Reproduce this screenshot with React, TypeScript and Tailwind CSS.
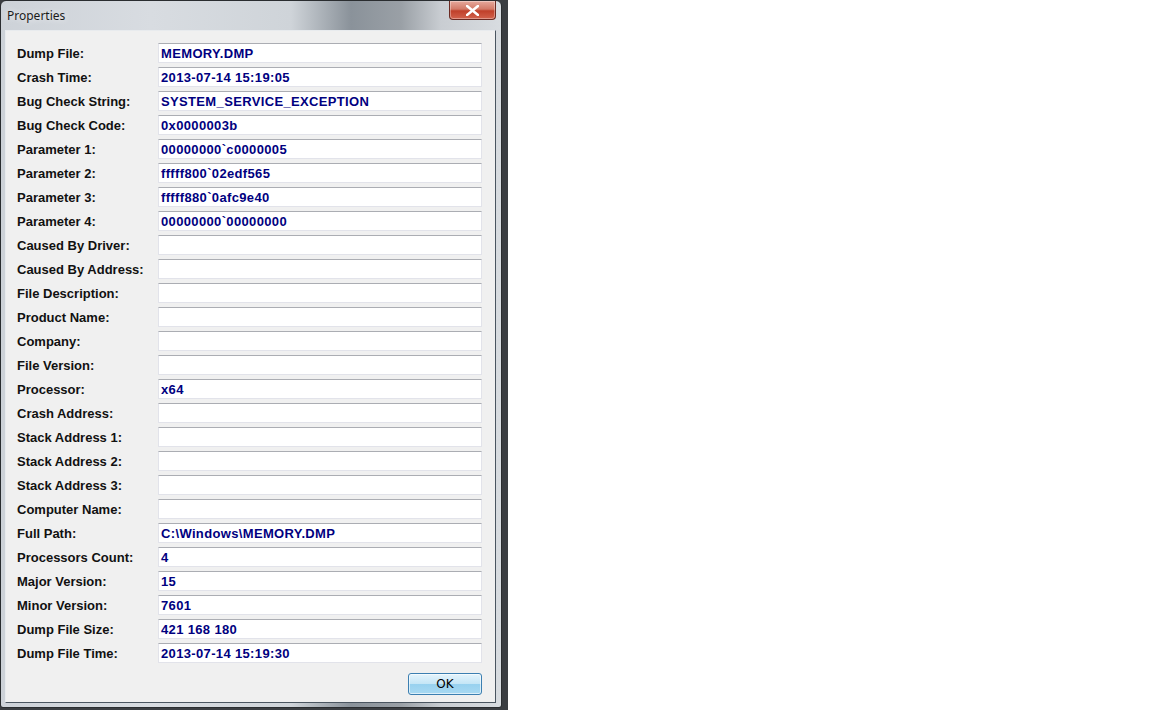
import React from "react";

const rows: [string, string][] = [
  ["Dump File:", "MEMORY.DMP"],
  ["Crash Time:", "2013-07-14 15:19:05"],
  ["Bug Check String:", "SYSTEM_SERVICE_EXCEPTION"],
  ["Bug Check Code:", "0x0000003b"],
  ["Parameter 1:", "00000000`c0000005"],
  ["Parameter 2:", "fffff800`02edf565"],
  ["Parameter 3:", "fffff880`0afc9e40"],
  ["Parameter 4:", "00000000`00000000"],
  ["Caused By Driver:", ""],
  ["Caused By Address:", ""],
  ["File Description:", ""],
  ["Product Name:", ""],
  ["Company:", ""],
  ["File Version:", ""],
  ["Processor:", "x64"],
  ["Crash Address:", ""],
  ["Stack Address 1:", ""],
  ["Stack Address 2:", ""],
  ["Stack Address 3:", ""],
  ["Computer Name:", ""],
  ["Full Path:", "C:\\Windows\\MEMORY.DMP"],
  ["Processors Count:", "4"],
  ["Major Version:", "15"],
  ["Minor Version:", "7601"],
  ["Dump File Size:", "421 168 180"],
  ["Dump File Time:", "2013-07-14 15:19:30"],
];

export default function App() {
  return (
    <div className="w-[1152px] h-[710px] bg-white flex">
      <div className="w-[508px] h-[710px] bg-[#3b3e42] flex flex-col">
        <div className="w-[502px] h-[708px] rounded-t-[6px] rounded-b-[3px] border border-[#2a2d30] bg-[linear-gradient(90deg,#cdd2d8_0%,#d8dce1_30%,#cfd4d9_58%,#8a929a_70%,#9aa0a6_80%,#c9cdd2_88%,#d8dce0_100%)] flex flex-col">
          <div className="h-[29px] flex items-start justify-between pl-[6px] pr-[5px]">
            <span
              className="mt-[8px] text-[12px] leading-[14px] text-[#1b1b1b]"
              style={{ fontFamily: '"Noto Sans", "Open Sans", sans-serif', textShadow: "0 0 6px rgba(255,255,255,0.9)" }}
            >
              Properties
            </span>
            <div className="w-[47px] h-[19px] rounded-b-[4px] border border-[#6b2a22] border-t-0 bg-[linear-gradient(180deg,#e6a99c_0%,#d27a68_45%,#c0402a_55%,#d2624c_100%)] flex items-center justify-center shadow-[inset_0_0_0_1px_rgba(255,255,255,0.35)]">
              <svg width="13" height="11" viewBox="0 0 13 11">
                <path d="M1 1 L12 10 M12 1 L1 10" stroke="#ffffff" strokeWidth="2.6" strokeLinecap="square" />
              </svg>
            </div>
          </div>
          <div className="flex-1 ml-[4px] mr-[5px] mb-[4px] border border-t-[#e8ebee] border-l-[#e8ebee] border-r-[#4a5560] border-b-[#4a5560] bg-[#f0f0f0] flex flex-col pt-[12px] pl-[11px] pr-[12px]">
            <div className="flex flex-col gap-[4px]">
              {rows.map(([label, value]) => (
                <div key={label} className="flex items-start h-[20px]">
                  <div
                    className="w-[141px] shrink-0 text-[13px] font-bold text-[#111] leading-[20px] pt-[1px]"
                    style={{ fontFamily: '"Liberation Sans", Arial, sans-serif' }}
                  >
                    {label}
                  </div>
                  <div
                    className="w-[324px] h-[20px] bg-white border border-[#e2e3ea] border-t-[#abadb3] pl-[2px] pt-[1px] text-[13px] font-bold text-[#00007f] leading-[18px] tracking-[0.35px] whitespace-pre overflow-hidden"
                    style={{ fontFamily: '"Liberation Sans", Arial, sans-serif' }}
                  >
                    {value}
                  </div>
                </div>
              ))}
            </div>
            <div className="flex justify-end mt-[10px] mr-[1px]">
              <div
                className="w-[74px] h-[22px] rounded-[3px] border border-[#3c7fb1] bg-[linear-gradient(180deg,#e5f4fc_0%,#c4e5f6_50%,#98d1ef_51%,#a8d9f2_100%)] shadow-[inset_0_0_0_1px_rgba(255,255,255,0.6)] flex items-center justify-center text-[12px] text-black"
                style={{ fontFamily: '"DejaVu Sans", sans-serif' }}
              >
                OK
              </div>
            </div>
          </div>
        </div>
      </div>
    </div>
  );
}
